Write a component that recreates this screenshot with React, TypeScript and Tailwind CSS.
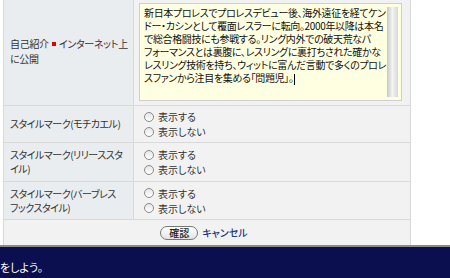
import React from 'react';

const bio = [
  '新日本プロレスでプロレスデビュー後、海外遠征を経てケン',
  'ドー・カシンとして覆面レスラーに転向。2000年以降は本名',
  'で総合格闘技にも参戦する。リング内外での破天荒なパ',
  'フォーマンスとは裏腹に、レスリングに裏打ちされた確かな',
  'レスリング技術を持ち、ウィットに富んだ言動で多くのプロレ',
  'スファンから注目を集める「問題児」。',
];

function Radio({ label }: { label: string }) {
  return (
    <div className="flex items-center h-[13px]">
      <span className="inline-block w-[10px] h-[10px] rounded-full border border-[#8a8a8a] bg-gradient-to-b from-[#e6e6e6] to-white mr-[4px]" />
      <span>{label}</span>
    </div>
  );
}

function RadioRow({ lines, height }: { lines: string[]; height: string }) {
  return (
    <div className={`flex border-b border-[#d9d9d9] ${height}`}>
      <div className="w-[130px] bg-[#e9edf0] border-r border-[#d9d9d9] pl-[6px] flex flex-col justify-center leading-[14px] whitespace-nowrap tracking-[-0.5px]">
        {lines.map((l) => (
          <div key={l}>{l}</div>
        ))}
      </div>
      <div className="flex-1 bg-[#f2f2f2] pl-[10px] flex flex-col justify-center gap-[2px]">
        <Radio label="表示する" />
        <Radio label="表示しない" />
      </div>
    </div>
  );
}

export default function App() {
  return (
    <div
      className="w-[450px] h-[278px] overflow-hidden bg-white text-[10px] text-[#333] [font-feature-settings:'palt']"
      style={{ fontFamily: '"Noto Sans CJK JP", "Noto Sans", sans-serif' }}
    >
      <div className="ml-[3px] w-[408px] border-l border-r border-[#d9d9d9]">
        {/* 自己紹介 */}
        <div className="flex border-b border-[#d9d9d9] h-[106px]">
          <div className="w-[130px] bg-[#e9edf0] border-r border-[#d9d9d9] pl-[6px] pt-[36px] leading-[15px] whitespace-nowrap tracking-[-0.3px]">
            <div>
              自己紹介<span className="inline-block w-[4px] h-[4px] bg-[#e00000] mx-[3px] align-middle mb-[2px]" />
              インターネット上
            </div>
            <div>に公開</div>
          </div>
          <div className="flex-1 bg-[#f2f2f2] pl-[5px] pt-[3px]">
            <div className="w-[263px] h-[98px] border border-[#cfcfcf] bg-[#ffffe1] flex">
              <div className="flex-1 pl-[4px] pt-[2px] leading-[13px] text-[#111] whitespace-nowrap overflow-hidden tracking-[-0.35px]">
                {bio.map((l, i) => (
                  <div key={i}>
                    {l}
                    {i === bio.length - 1 && <span className="inline-block w-px h-[11px] bg-black align-middle" />}
                  </div>
                ))}
              </div>
              <div className="w-[11px] my-[3px] mr-[3px] bg-gradient-to-r from-[#c8c8c8] via-[#f4f4f4] to-[#d8d8d8]" />
            </div>
          </div>
        </div>

        <RadioRow lines={['スタイルマーク(モチカエル)']} height="h-[37px]" />
        <RadioRow lines={['スタイルマーク(リリーススタ', 'イル)']} height="h-[39px]" />
        <RadioRow lines={['スタイルマーク(バーブレス', 'フックスタイル)']} height="h-[38px]" />

        {/* buttons */}
        <div className="h-[25px] bg-[#f2f2f2] flex items-center justify-center gap-[4px] pr-[6px]">
          <button className="h-[14px] px-[8px] rounded-full border border-[#777] bg-gradient-to-b from-white to-[#e4e4e4] text-[10px] font-medium leading-none text-[#222]">
            確認
          </button>
          <a className="text-[#1a3a8a] font-medium">キャンセル</a>
        </div>
      </div>

      {/* footer */}
      <div className="border-t-2 border-[#8a8a8a] bg-[#0b0e4f] h-[40px] text-white text-[11px] pt-[12px]">
        をしよう。
      </div>
    </div>
  );
}
